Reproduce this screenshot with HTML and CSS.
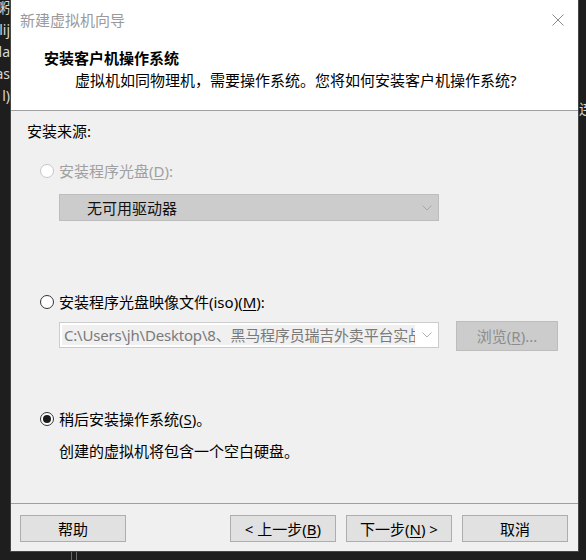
FILE: index.html
```html
<!DOCTYPE html>
<html lang="zh-CN">
<head>
<meta charset="utf-8">
<title>新建虚拟机向导</title>
<link rel="stylesheet" href="styles.css">
</head>
<body>
<div class="screen">
  <div class="strip-left">
    <div>粥</div>
    <div>lij</div>
    <div>la</div>
    <div>as</div>
    <div>l)</div>
  </div>
  <div class="dialog">
    <div class="header">
      <div class="titlebar">
        <span class="title">新建虚拟机向导</span>
        <svg class="close" width="12" height="12" viewBox="0 0 12 12"><path d="M0.5 0.5 L11.5 11.5 M11.5 0.5 L0.5 11.5" stroke="#8a8a8a" stroke-width="1" fill="none"/></svg>
      </div>
      <div class="heading">安装客户机操作系统</div>
      <div class="subtitle">虚拟机如同物理机，需要操作系统。您将如何安装客户机操作系统?</div>
    </div>
    <div class="sep"></div>
    <div class="body">
      <div class="label-src">安装来源:</div>
      <div class="radio-row r1 disabled">
        <span class="radio"></span>
        <span>安装程序光盘(<u>D</u>):</span>
      </div>
      <div class="dropdown">
        <span class="dd-text">无可用驱动器</span>
        <svg class="chev" width="10" height="6" viewBox="0 0 10 6"><polyline points="0.5,0.5 5,5 9.5,0.5" fill="none" stroke="#a8a8a8" stroke-width="1"/></svg>
      </div>
      <div class="radio-row r2">
        <span class="radio"></span>
        <span>安装程序光盘映像文件(iso)(<u>M</u>):</span>
      </div>
      <div class="iso-row">
        <div class="combo">
          <span class="combo-text">C:\Users\jh\Desktop\8、黑马程序员瑞吉外卖平台实战</span>
          <svg class="chev" width="10" height="6" viewBox="0 0 10 6"><polyline points="0.5,0.5 5,5 9.5,0.5" fill="none" stroke="#b0b0b0" stroke-width="1"/></svg>
        </div>
        <div class="browse">浏览(<u>R</u>)...</div>
      </div>
      <div class="radio-row r3">
        <span class="radio checked"></span>
        <span>稍后安装操作系统(<u>S</u>)。</span>
      </div>
      <div class="note">创建的虚拟机将包含一个空白硬盘。</div>
    </div>
    <div class="sep"></div>
    <div class="footer">
      <div class="btn">帮助</div>
      <div class="spacer"></div>
      <div class="btn">&lt; 上一步(<u>B</u>)</div>
      <div class="btn">下一步(<u>N</u>) &gt;</div>
      <div class="btn">取消</div>
    </div>
  </div>
  <div class="strip-right"><span>连</span></div>
  <div class="strip-bottom"><span class="vline"></span><span class="vline"></span></div>
</div>
</body>
</html>
```
FILE: styles.css
```css
html, body {
  margin: 0;
  padding: 0;
}
body {
  background: #1e1e1e;
  width: 586px;
  height: 560px;
  overflow: hidden;
  font-family: "Noto Sans", "Noto Sans CJK SC", sans-serif;
  font-size: 15px;
  color: #000;
}
u {
  text-decoration: underline;
  text-underline-offset: 2px;
}
.screen {
  display: grid;
  grid-template-columns: 10px 569px 7px;
  grid-template-rows: 552px 8px;
  width: 586px;
  height: 560px;
}
.strip-left {
  grid-row: 1 / 3;
  grid-column: 1;
  overflow: hidden;
  color: #d8d8d8;
  font-size: 14px;
  line-height: 22px;
  margin-top: -3px;
  display: flex;
  flex-direction: column;
  align-items: flex-end;
  white-space: nowrap;
}
.strip-right {
  grid-row: 1 / 3;
  grid-column: 3;
  overflow: hidden;
  color: #d8d8d8;
  font-size: 14px;
  line-height: 16px;
  padding-top: 101px;
  white-space: nowrap;
}
.strip-bottom {
  grid-row: 2;
  grid-column: 2;
  display: flex;
  gap: 4px;
  padding-left: 61px;
}
.vline {
  width: 1px;
  height: 8px;
  background: #6a6a6a;
}
.dialog {
  grid-row: 1;
  grid-column: 2;
  border: 1px solid #454545;
  border-top: none;
  background: #f0f0f0;
  display: flex;
  flex-direction: column;
}
.header {
  height: 110px;
  background: #fff;
}
.titlebar {
  height: 40px;
  display: flex;
  align-items: center;
  justify-content: space-between;
  padding: 0 14px 0 9px;
}
.title {
  color: #9a9a9a;
  line-height: 20px;
}
.heading {
  margin-top: 8px;
  padding-left: 33px;
  font-weight: bold;
  line-height: 20px;
}
.subtitle {
  margin-top: 2px;
  padding-left: 64px;
  line-height: 20px;
}
.sep {
  height: 1px;
  background: #a0a0a0;
}
.body {
  height: 392px;
  padding: 10px 0 0 0;
  box-sizing: border-box;
}
.label-src {
  padding-left: 16px;
  line-height: 20px;
}
.radio-row {
  display: flex;
  align-items: center;
  gap: 5px;
  padding-left: 29px;
  line-height: 20px;
}
.r1 { margin-top: 20px; }
.r2 { margin-top: 71px; }
.r3 { margin-top: 58px; }
.disabled { color: #a0a0a0; }
.radio {
  flex: none;
  width: 14px;
  height: 14px;
  box-sizing: border-box;
  border: 1px solid #333;
  border-radius: 50%;
  background: #fff;
  display: flex;
  align-items: center;
  justify-content: center;
}
.disabled .radio {
  border-color: #c6c6c6;
}
.radio.checked::after {
  content: "";
  width: 8px;
  height: 8px;
  border-radius: 50%;
  background: #1a1a1a;
}
.dropdown {
  margin: 13px 0 0 48px;
  width: 380px;
  height: 27px;
  box-sizing: border-box;
  background: #cccccc;
  border: 1px solid #bdbdbd;
  display: flex;
  align-items: center;
  justify-content: space-between;
  padding: 0 6px 0 27px;
}
.dd-text {
  line-height: 20px;
  color: #111;
}
.iso-row {
  margin: 9px 0 0 48px;
  display: flex;
  align-items: flex-start;
  gap: 17px;
}
.combo {
  margin-top: 1px;
  width: 380px;
  height: 26px;
  box-sizing: border-box;
  background: #fff;
  border: 1px solid #cccccc;
  display: flex;
  align-items: center;
  padding: 0 6px 0 2px;
}
.combo-text {
  width: 353px;
  height: 20px;
  overflow: hidden;
  white-space: nowrap;
  background: #f0f0f0;
  color: #7a7a7a;
  line-height: 20px;
  padding-left: 2px;
  box-sizing: border-box;
  flex: none;
  letter-spacing: -0.2px;
}
.combo .chev {
  margin-left: auto;
}
.browse {
  width: 102px;
  height: 30px;
  box-sizing: border-box;
  background: #cccccc;
  border: 1px solid #bdbdbd;
  color: #8c8c8c;
  display: flex;
  align-items: center;
  justify-content: center;
  line-height: 20px;
}
.note {
  margin-top: 12px;
  padding-left: 48px;
  line-height: 20px;
}
.footer {
  flex: 1;
  display: flex;
  align-items: flex-start;
  padding: 11px 10px 0 9px;
  gap: 10px;
}
.spacer {
  flex: 1;
}
.btn {
  width: 106px;
  height: 27px;
  box-sizing: border-box;
  border: 1px solid #adadad;
  background: #e1e1e1;
  display: flex;
  align-items: center;
  justify-content: center;
  line-height: 20px;
}
```
